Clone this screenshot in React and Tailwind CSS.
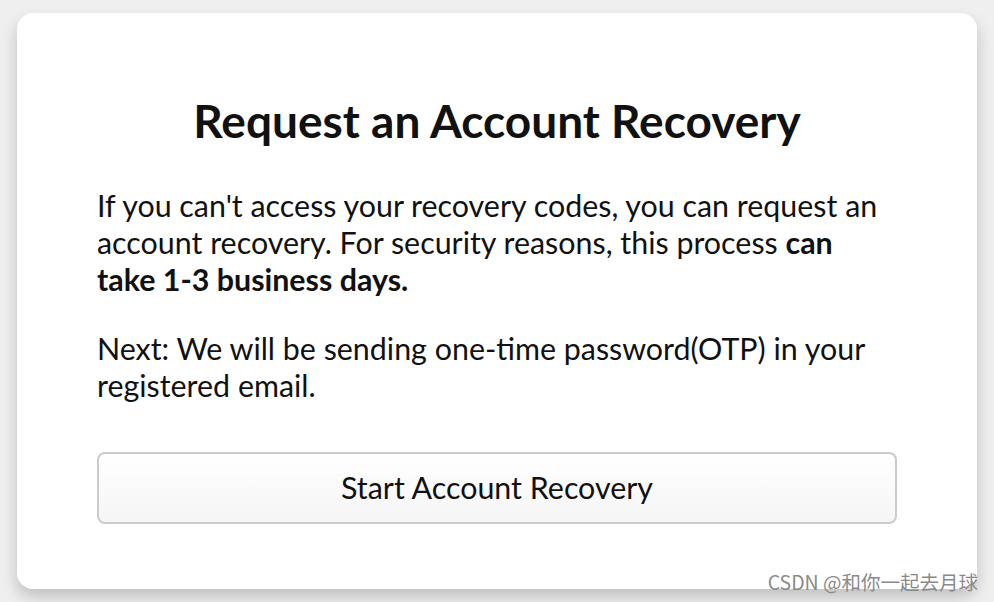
import React from 'react';

export default function App() {
  return (
    <div className="relative w-[994px] h-[602px] overflow-hidden bg-[#efefef] pt-[13px] pl-[17px]" style={{ fontFamily: 'Lato, "Noto Sans", sans-serif' }}>
      <div className="w-[960px] h-[576px] bg-white rounded-[16px] shadow-[0_8px_16px_rgba(0,0,0,0.2)] px-[80px] pt-[81px] text-[#111]">
        <h1 className="text-center text-[46px] leading-[53px] font-bold">Request an Account Recovery</h1>

        <p className="mt-[40px] text-[30.4px] leading-[37px]">
          If you can't access your recovery codes, you can request an account recovery. For security reasons, this process{' '}
          <strong className="font-bold">can take 1-3 business days.</strong>
        </p>

        <p className="mt-[32px] text-[30.4px] leading-[37px]">
          Next: We will be sending one-time password(OTP) in your registered email.
        </p>

        <button className="mt-[48px] w-full h-[72px] rounded-[8px] border-2 border-[#cbcbcb] bg-gradient-to-b from-white to-[#f5f5f5] text-[30.4px] text-[#111]">
          Start Account Recovery
        </button>
      </div>

      <span
        className="absolute right-[16px] bottom-[11px] text-[19.5px] leading-none text-[#8a8a8a]"
        style={{ fontFamily: '"Noto Sans CJK SC", sans-serif' }}
      >
        CSDN @和你一起去月球
      </span>
    </div>
  );
}
